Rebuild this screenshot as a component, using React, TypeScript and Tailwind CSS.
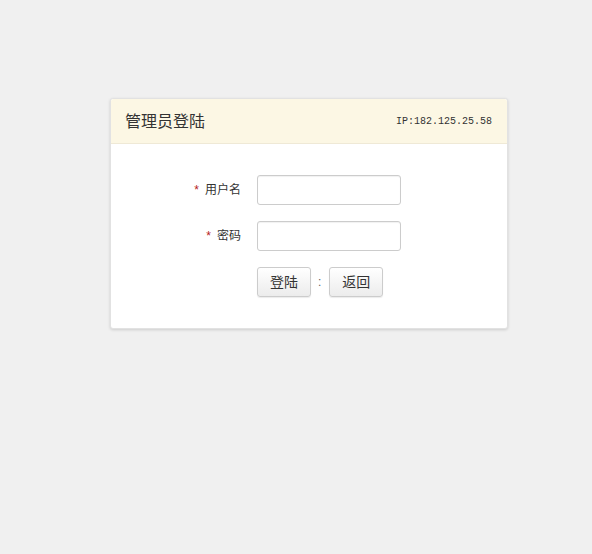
import React from 'react';

const App: React.FC = () => {
  return (
    <div className="min-h-[554px] w-full bg-[#f0f0f0] pt-[98px] font-['Liberation_Sans','Noto_Sans_CJK_SC',sans-serif]">
      <div className="ml-[110px] w-[398px] rounded-[3px] bg-white shadow-[0_1px_3px_rgba(0,0,0,0.15)] border border-[#e2e2e2]">
        {/* header */}
        <div className="flex h-[45px] items-center justify-between rounded-t-[3px] border-b border-[#efe9d6] bg-[#fcf7e4] pl-[14px] pr-[15px]">
          <span className="pt-[2px] text-[16px] text-[#333]">管理员登陆</span>
          <span className="font-['Liberation_Mono',monospace] text-[10px] text-[#333]">IP:182.125.25.58</span>
        </div>

        {/* form */}
        <div className="flex flex-col gap-4 pt-[31px] pb-[31px]">
          <div className="flex items-center">
            <label className="w-[130px] text-right text-[12px] text-[#333]">
              <span className="mr-[6px] text-[#b52121]">*</span>用户名
            </label>
            <input className="ml-[16px] h-[30px] w-[144px] rounded-[3px] border border-[#ccc] bg-white shadow-[inset_0_1px_1px_rgba(0,0,0,0.06)] outline-none" />
          </div>
          <div className="flex items-center">
            <label className="w-[130px] text-right text-[12px] text-[#333]">
              <span className="mr-[6px] text-[#b52121]">*</span>密码
            </label>
            <input type="password" className="ml-[16px] h-[30px] w-[144px] rounded-[3px] border border-[#ccc] bg-white shadow-[inset_0_1px_1px_rgba(0,0,0,0.06)] outline-none" />
          </div>
          <div className="flex items-center pl-[146px]">
            <button className="h-[30px] w-[54px] rounded-[3px] border border-[#ccc] bg-gradient-to-b from-white to-[#ececec] text-[14px] text-[#333] shadow-[0_1px_1px_rgba(0,0,0,0.08)]">登陆</button>
            <span className="ml-[7px] mr-[8px] text-[12px] text-[#666]">:</span>
            <button className="h-[30px] w-[54px] rounded-[3px] border border-[#ccc] bg-gradient-to-b from-white to-[#ececec] text-[14px] text-[#333] shadow-[0_1px_1px_rgba(0,0,0,0.08)]">返回</button>
          </div>
        </div>
      </div>
    </div>
  );
};

export default App;
